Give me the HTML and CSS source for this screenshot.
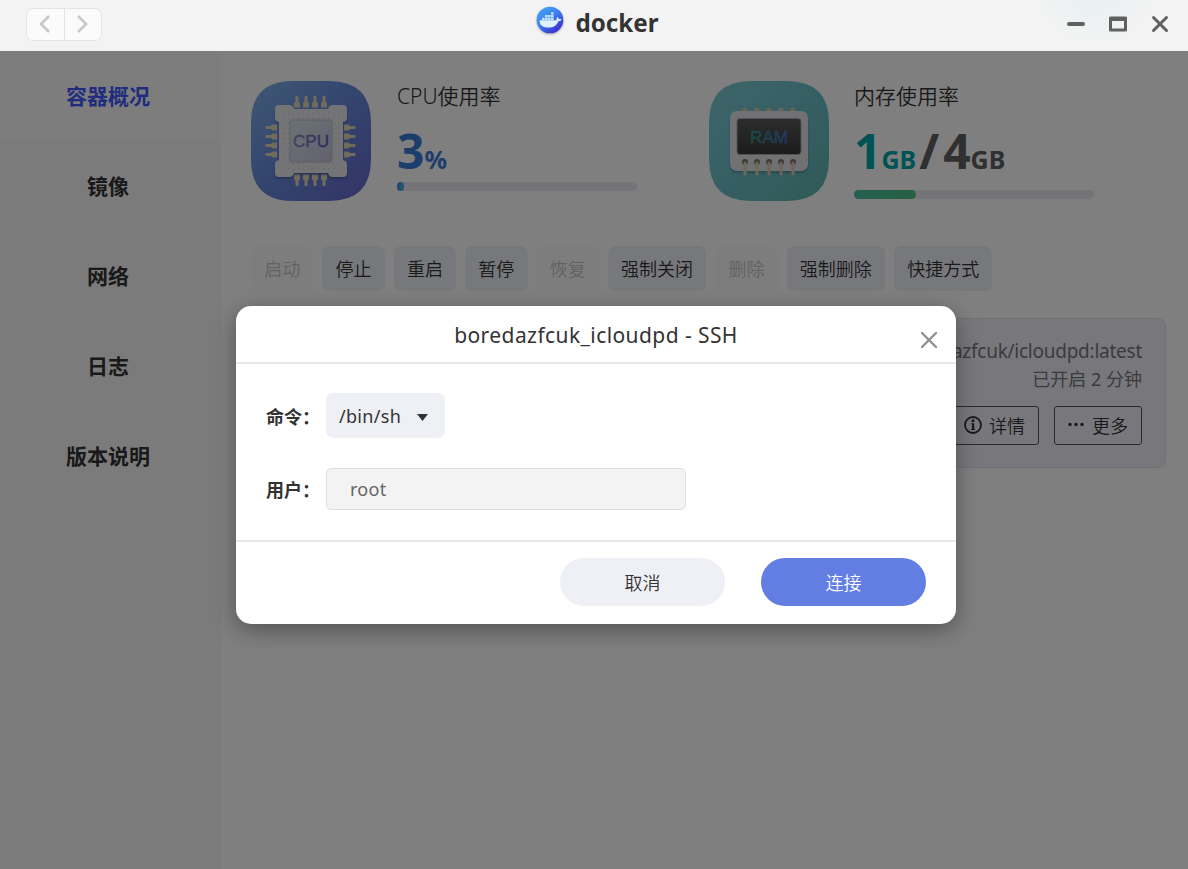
FILE: index.html
```html
<!DOCTYPE html>
<html lang="zh-CN">
<head>
  <meta charset="UTF-8" />
  <meta name="viewport" content="width=device-width, initial-scale=1" />
  <title>docker</title>
  <link rel="stylesheet" href="styles.css">
</head>
<body>
  <header class="topbar">
    <div class="history">
      <button type="button"><svg width="12" height="20" viewBox="0 0 12 20"><path d="M10 2L2 10l8 8" /></svg></button>
      <button type="button"><svg width="12" height="20" viewBox="0 0 12 20"><path d="M2 2l8 8-8 8" /></svg></button>
    </div>
    <div class="brand">
      <svg class="logo" width="28" height="28" viewBox="0 0 28 28">
        <defs>
          <linearGradient id="logoBg" x1="0" y1="0" x2="0.7" y2="1">
            <stop offset="0" stop-color="#43aefb" />
            <stop offset="0.5" stop-color="#3c80f2" />
            <stop offset="1" stop-color="#3c2fd0" />
          </linearGradient>
        </defs>
        <circle cx="14" cy="14" r="13.3" fill="url(#logoBg)" />
        <path d="M3.500 14.200h17c.2-1.300.1-2.200.8-3.200 1 .5 1.500 1.200 1.600 2.200 1-.2 2-.1 2.700.3-.6 1.200-1.700 1.700-3.200 1.700C20.600 19.500 17.500 21.600 12.800 21.600 7.500 21.600 3.500 19.500 3.500 14.200z" fill="#dff1fd" />
        <path d="M6 11.700h2.600v2.300H6zM9 11.700h2.600v2.300H9zM12 11.700h2.600v2.300H12zM15 11.700h2.600v2.300H15zM9 9h2.600v2.300H9zM12 9h2.600v2.300H12zM15 9h2.600v2.300H15zM15 6.300h2.600v2.300H15z" fill="#c3e5fb" />
      </svg>
      <span>docker</span>
    </div>
    <div class="window-buttons">
      <svg width="18" height="18" viewBox="0 0 18 18"><path d="M2 9h14" stroke-width="4" /></svg>
      <svg width="18" height="18" viewBox="0 0 18 18"><path d="M1.500 3h15v12h-15z" stroke-width="3" /><path d="M2 4h14" stroke-width="4" /></svg>
      <svg width="18" height="18" viewBox="0 0 18 18"><path d="M2.500 2.500l13 13M15.500 2.500l-13 13" stroke-width="3" /></svg>
    </div>
  </header>

  <div class="layout">
    <nav class="sidebar">
      <a class="active">容器概况</a>
      <a>镜像</a>
      <a>网络</a>
      <a>日志</a>
      <a>版本说明</a>
    </nav>

    <main class="content">
      <section class="stats">
        <div class="stat">
          <svg width="120" height="120" viewBox="0 0 120 120">
            <defs>
              <linearGradient id="cpuBg" x1="0" y1="0" x2="1" y2="1">
                <stop offset="0" stop-color="#7eb0e8" />
                <stop offset="0.5" stop-color="#6688dc" />
                <stop offset="1" stop-color="#6668cc" />
              </linearGradient>
              <linearGradient id="cpuDie" x1="0" y1="0" x2="1" y2="1">
                <stop offset="0" stop-color="#d5e5e8" />
                <stop offset="1" stop-color="#c6c3de" />
              </linearGradient>
              <linearGradient id="cpuText" x1="0" y1="0" x2="1" y2="0">
                <stop offset="0" stop-color="#947cbc" />
                <stop offset="1" stop-color="#5c5cbc" />
              </linearGradient>
              <pattern id="dots" width="5" height="5" patternUnits="userSpaceOnUse">
                <circle cx="2.500" cy="2.500" r="0.700" fill="#c8cace" />
              </pattern>
              <path id="pin" d="M-1.500-6.500Q0-8 1.500-6.500V-1.500L3 0V4.500H-3V0l1.500-1.500z" />
              <g id="pins" fill="#e2d6b4">
                <use href="#pin" x="-13.500" />
                <use href="#pin" x="-4.500" />
                <use href="#pin" x="4.500" />
                <use href="#pin" x="13.500" />
              </g>
            </defs>
            <path d="M42 0h36q42 0 42 42v36q0 42-42 42H42Q0 120 0 78V42Q0 0 42 0z" fill="url(#cpuBg)" />
            <use href="#pins" transform="translate(59.500 22)" />
            <use href="#pins" transform="translate(97.500 60) rotate(90)" />
            <use href="#pins" transform="translate(59.500 98) rotate(180)" />
            <use href="#pins" transform="translate(21.500 60) rotate(-90)" />
            <path class="chip" d="M28 24h10q4 0 5 4h34q1-4 5-4h10q4 0 4 4v9q0 3-4 4v38q4 1 4 4v9q0 4-4 4H82q-4 0-5-4H43q-1 4-5 4H28q-4 0-4-4v-9q0-3 4-4V41q-4-1-4-4v-9q0-4 4-4z" fill="#e8e9ee" />
            <path d="M29 29h62v62H29z" fill="url(#dots)" />
            <rect x="39" y="39" width="42" height="42" rx="1.500" fill="url(#cpuDie)" stroke="#b9c1cc" />
            <text x="60" y="66" text-anchor="middle" class="chip-label" fill="url(#cpuText)" stroke="url(#cpuText)">CPU</text>
          </svg>
          <div class="stat-info">
            <div class="stat-title">CPU使用率</div>
            <div class="stat-value blue">3<small>%</small></div>
            <div class="bar"><div class="fill fill-cpu" style="width: 3%"></div></div>
          </div>
        </div>

        <div class="stat">
          <svg width="120" height="120" viewBox="0 0 120 120">
            <defs>
              <linearGradient id="ramBg" x1="0" y1="0" x2="1" y2="1">
                <stop offset="0" stop-color="#7cccd4" />
                <stop offset="0.5" stop-color="#6cbec8" />
                <stop offset="1" stop-color="#60b4ac" />
              </linearGradient>
              <linearGradient id="ramScreen" x1="0" y1="0" x2="0" y2="1">
                <stop offset="0" stop-color="#5a5a5c" />
                <stop offset="1" stop-color="#383839" />
              </linearGradient>
              <linearGradient id="ramText" x1="0" y1="0" x2="1" y2="0">
                <stop offset="0" stop-color="#359888" />
                <stop offset="0.500" stop-color="#3a80a4" />
                <stop offset="1" stop-color="#4d70c4" />
              </linearGradient>
            </defs>
            <path d="M42 0h36q42 0 42 42v36q0 42-42 42H42Q0 120 0 78V42Q0 0 42 0z" fill="url(#ramBg)" />
            <path d="M36 29.500v4M48 29.500v4M60 29.500v4M72 29.500v4M84 29.500v4" stroke="#d5c9a8" stroke-width="5.500" stroke-linecap="round" />
            <rect class="chip" x="21" y="30" width="78" height="60" rx="7" fill="#e3e3e6" />
            <rect x="28" y="37.500" width="64" height="36" rx="3" fill="url(#ramScreen)" stroke="#a6a6aa" />
            <text x="60" y="62" text-anchor="middle" class="chip-label" fill="url(#ramText)" stroke="url(#ramText)">RAM</text>
            <g fill="#77777a">
              <circle cx="36" cy="81" r="3" />
              <circle cx="48" cy="81" r="3" />
              <circle cx="60" cy="81" r="3" />
              <circle cx="72" cy="81" r="3" />
              <circle cx="84" cy="81" r="3" />
            </g>
            <path d="M36 82v11M48 82v11" stroke="#d8d4a4" stroke-width="3" stroke-linecap="round" />
            <path d="M60 82v11M72 82v11M84 82v11" stroke="#dec4b2" stroke-width="3" stroke-linecap="round" />
          </svg>
          <div class="stat-info mem">
            <div class="stat-title">内存使用率</div>
            <div class="stat-value"><span class="teal">1<small>GB</small></span><i>/</i>4<small>GB</small></div>
            <div class="bar"><div class="fill fill-mem" style="width: 26%"></div></div>
          </div>
        </div>
      </section>

      <section class="toolbar">
        <button type="button" disabled>启动</button>
        <button type="button">停止</button>
        <button type="button">重启</button>
        <button type="button">暂停</button>
        <button type="button" disabled>恢复</button>
        <button type="button">强制关闭</button>
        <button type="button" disabled>删除</button>
        <button type="button">强制删除</button>
        <button type="button">快捷方式</button>
      </section>

      <section class="card">
        <div class="image-name">boredazfcuk/icloudpd:latest</div>
        <div class="uptime">已开启 2 分钟</div>
        <div class="card-actions">
          <button type="button">
            <svg width="18" height="18" viewBox="0 0 18 18"><circle cx="9" cy="9" r="8" fill="none" stroke="#333" stroke-width="1.800" /><path d="M7.200 7.200H10.200V13H11v1H7v-1h1V8.200h-.8z" fill="#333" /><circle cx="9" cy="4.700" r="1.500" fill="#333" /></svg>
            <span>详情</span>
          </button>
          <button type="button">
            <svg width="18" height="18" viewBox="0 0 18 18"><g fill="#333"><circle cx="3" cy="8.500" r="1.700" /><circle cx="9" cy="8.500" r="1.700" /><circle cx="15" cy="8.500" r="1.700" /></g></svg>
            <span>更多</span>
          </button>
        </div>
      </section>
    </main>

    <div class="mask"></div>
  </div>

  <form class="modal">
    <div class="modal-header">
      <h2>boredazfcuk_icloudpd - SSH</h2>
      <svg class="close" width="18" height="18" viewBox="0 0 18 18"><path d="M2 2l14 14M16 2L2 16" /></svg>
    </div>
    <div class="modal-body">
      <div class="row">
        <label>命令：</label>
        <div class="dropdown"><span>/bin/sh</span><svg width="11" height="7" viewBox="0 0 11 7"><path d="M0 0h11L5.500 7z" fill="#333" /></svg></div>
      </div>
      <div class="row">
        <label for="user">用户：</label>
        <input type="text" id="user" value="root" />
      </div>
    </div>
    <div class="modal-footer">
      <button type="button" class="cancel">取消</button>
      <button type="button" class="confirm">连接</button>
    </div>
  </form>
</body>
</html>
```
FILE: styles.css
```css
* {
  box-sizing: border-box;
}
body {
  margin: 0;
  height: 869px;
  overflow: hidden;
  position: relative;
  display: flex;
  flex-direction: column;
  background: #fff;
  color: #333;
  font-family: "Noto Sans", "Noto Sans CJK SC", sans-serif;
  font-size: 18px;
}
button, input {
  font-family: inherit;
  font-size: inherit;
  color: inherit;
}
button {
  font-weight: 350;
}

/* top bar */
.topbar {
  display: grid;
  grid-template-columns: 1fr auto 1fr;
  align-items: center;
  height: 51px;
  padding: 0 19px 3px 26px;
  background: radial-gradient(circle at 1095px -20px, #e4eff2 0, rgba(243,243,243,0) 65px), #f3f3f3;
}
.history {
  display: flex;
  width: 76px;
  height: 33px;
  border: 1px solid #e4e4e4;
  border-radius: 7px;
  background: #fbfbfb;
}
.history button {
  width: 37px;
  display: flex;
  align-items: center;
  justify-content: center;
  padding: 0 2px 0 0;
  border: none;
  background: none;
}
.history button + button {
  border-left: 1px solid #e4e4e4;
}
.history path {
  fill: none;
  stroke: #c8c8c8;
  stroke-width: 2.6;
}
.brand {
  display: flex;
  align-items: center;
  gap: 11px;
  padding-bottom: 5px;
  font-size: 24.2px;
  line-height: 40px;
  font-weight: bold;
}
.brand span {
  padding-top: 2px;
}
.logo {
  margin-top: -4px;
  filter: drop-shadow(0 1px 1px rgba(0,0,0,0.3));
}
.window-buttons {
  display: flex;
  justify-content: flex-end;
  gap: 24px;
}
.window-buttons path {
  fill: none;
  stroke: #606060;
  stroke-linecap: round;
  stroke-linejoin: round;
}

/* page */
.layout {
  flex: 1;
  display: flex;
  position: relative;
}
.mask {
  position: absolute;
  inset: 0;
  background: rgba(0,0,0,0.5);
}
.sidebar {
  width: 221px;
  background: #f7f7f7;
}
.sidebar a {
  display: block;
  height: 90px;
  padding-right: 5px;
  line-height: 90px;
  text-align: center;
  font-size: 21px;
  font-weight: bold;
}
.sidebar .active {
  background: #fbfbfb;
  color: #4259ff;
}
.content {
  flex: 1;
  padding: 30px 22px 0 30px;
}
.stats {
  display: flex;
  gap: 72px;
  height: 165px;
}
.stat {
  display: flex;
  gap: 26px;
}
.stat + .stat .stat-info {
  margin-left: -1px;
}
.stat-info {
  width: 240px;
}
.stat-title {
  font-size: 21px;
  line-height: 30px;
  font-weight: 350;
}
.stat-value {
  height: 71px;
  line-height: 79px;
  font-size: 48px;
  font-weight: bold;
  color: #606060;
}
.stat-value small {
  font-size: 25px;
}
.stat-value i {
  padding: 0 4px 0 3px;
  font-style: normal;
}
.mem .stat-value {
  height: 79px;
}
.stat-value.blue {
  color: #3a7ad8;
}
.teal {
  color: #00a6aa;
}
.bar {
  height: 9px;
  border-radius: 5px;
  background: #e8e9f3;
}
.fill {
  height: 100%;
  border-radius: 5px;
}
.fill-cpu {
  background: linear-gradient(90deg, #488ce0, #50b4d4);
}
.fill-mem {
  background: linear-gradient(90deg, #44c0a4, #50c080);
}
.chip {
  filter: drop-shadow(0 2px 1px rgba(0,0,0,0.2));
}
.chip-label {
  font-family: "Liberation Sans", sans-serif;
  font-size: 17px;
  stroke-width: 0.4px;
}
.toolbar {
  display: flex;
  gap: 9px;
}
.toolbar button {
  height: 45px;
  padding: 0 13.2px 1px;
  border: none;
  border-radius: 7px;
  background: #eff1f6;
}
.toolbar button:disabled {
  background: #fbfbfc;
  color: #c4c4c6;
}
.card {
  height: 150px;
  margin-top: 27px;
  padding: 18px 23px;
  border: 1px solid #dfe2ec;
  border-radius: 8px;
  background: #f0f1f9;
  text-align: right;
}
.image-name, .uptime {
  line-height: 28px;
  color: #777;
}
.image-name {
  font-size: 19px;
  letter-spacing: -0.25px;
}
.card-actions {
  display: flex;
  justify-content: flex-end;
  gap: 15px;
  margin-top: 13px;
}
.card-actions button {
  display: flex;
  align-items: center;
  justify-content: center;
  gap: 7px;
  width: 88px;
  height: 39px;
  padding: 0 1px 2px 0;
  border: 1px solid #555;
  border-radius: 3px;
  background: none;
}

/* dialog */
.modal {
  position: absolute;
  left: 236px;
  top: 306px;
  width: 720px;
  height: 318px;
  border-radius: 15px;
  background: #fff;
  box-shadow: 0 6px 22px rgba(0,0,0,0.35);
}
.modal-header {
  position: relative;
  height: 58px;
  border-bottom: 2px solid #e8e8e8;
}
.modal-header h2 {
  margin: 0;
  line-height: 58px;
  text-align: center;
  font-size: 21px;
  font-weight: normal;
  letter-spacing: 0.42px;
}
.close {
  position: absolute;
  right: 18px;
  top: 25px;
}
.close path {
  stroke: #8e9096;
  stroke-width: 2.4;
  stroke-linecap: round;
}
.modal-body {
  display: flex;
  flex-direction: column;
  gap: 30px;
  height: 178px;
  padding: 29px 30px 0;
  border-bottom: 2px solid #e8e8e8;
}
.row {
  display: flex;
  align-items: center;
}
.row label {
  width: 60px;
  font-weight: bold;
}
.dropdown {
  display: flex;
  align-items: center;
  justify-content: space-between;
  width: 119px;
  height: 45px;
  padding: 0 17px 0 13px;
  border-radius: 7px;
  background: #eff0f5;
  letter-spacing: 0.3px;
}
.dropdown svg {
  margin-top: 3px;
}
.row input {
  width: 360px;
  height: 42px;
  padding: 0 23px;
  border: 1px solid #dcdee6;
  border-radius: 5px;
  background: #f3f3f3;
  color: #666;
  letter-spacing: 0.3px;
}
.modal-footer {
  display: flex;
  justify-content: flex-end;
  gap: 36px;
  padding: 16px 30px;
}
.modal-footer button {
  width: 165px;
  height: 48px;
  padding-bottom: 2px;
  border: none;
  border-radius: 24px;
  background: #eff0f5;
}
.modal-footer .confirm {
  background: #627ee2;
  color: #fff;
}
```
